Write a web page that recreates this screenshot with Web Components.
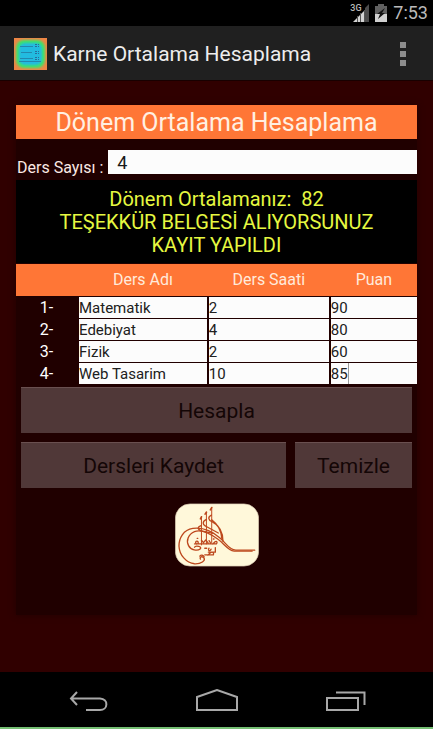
<!DOCTYPE html>
<html lang="tr">
<head>
<meta charset="utf-8">
<meta name="viewport" content="width=device-width, initial-scale=1">
<title>Karne Ortalama Hesaplama</title>
<style>
  html, body { margin: 0; min-height: 100%; background: #000; }
  body { font-family: Roboto, "Liberation Sans", sans-serif; color: #fbe9e4; }
</style>
</head>
<body>
<grade-app></grade-app>

<script>
const define = (name, html, setup) => {
  const template = document.createElement('template');
  template.innerHTML = '<style>*{box-sizing:border-box}button,input{font-family:inherit;margin:0;border:0;border-radius:0;outline:0}</style>' + html;
  customElements.define(name, class extends HTMLElement {
    constructor() {
      super();
      this.attachShadow({ mode: 'open' }).append(template.content.cloneNode(true));
    }
    connectedCallback() { if (setup) setup(this.shadowRoot, this); }
  });
};

define('status-bar', `
  <style>
    :host { display: flex; align-items: center; justify-content: flex-end; height: 26px; padding-right: 5px; background: #000; color: #bababa; }
    svg { display: block; }
    .signal { margin-right: 6px; position: relative; display: flex; }
    .net { font-size: 9px; line-height: 8px; font-weight: 500; position: absolute; left: 0; top: 0; }
    .battery { margin-right: 6px; }
    time { font-size: 18px; line-height: 26px; }
  </style>
  <span class="signal"><span class="net">3G</span>
    <svg width="19" height="18" viewBox="0 0 19 18" aria-label="Sinyal"><path fill="#d4d4d4" d="M3 18 14 7V18Z"/><path fill="#4c4c4c" d="M15 4 19 0V18H15Z"/><path stroke="#555" d="M7.500 12V18M10.500 9V18M14.500 6V18"/></svg>
  </span>
  <svg class="battery" width="12" height="18" viewBox="0 0 12 18" aria-label="Pil"><path fill="#606060" d="M3 0H9V2H12V18H0V2H3Z"/><path fill="#d0d0d0" d="M0 10H12V18H0Z"/><path fill="#111" d="M10 4 2 10H5L3 15 10 9H7Z"/></svg>
  <time>7:53</time>`);

define('app-bar', `
  <style>
    :host { display: flex; align-items: center; height: 54px; padding: 2px 20px 0 14px; background: #202020; color: #ededed; }
    h1 { flex: 1; margin: 0 0 0 6px; font-size: 21px; line-height: 28px; font-weight: 400; white-space: nowrap; }
    button { display: flex; justify-content: center; width: 20px; padding: 4px 0; background: none; }
    svg { display: block; }
  </style>
  <svg width="33" height="32" viewBox="0 0 33 32" aria-hidden="true">
    <defs>
      <filter id="soft" x="-20%" y="-20%" width="140%" height="140%"><feGaussianBlur stdDeviation="1.200"/></filter>
      <clipPath id="c"><path d="M0 0H33V32H0Z"/></clipPath>
    </defs>
    <path fill="#ee8645" d="M0 0H33V32H0Z"/>
    <g clip-path="url(#c)">
      <rect x="2" y="2" width="29" height="28" rx="8" fill="#3ee46a" filter="url(#soft)"/>
      <rect x="5" y="5" width="23" height="22" rx="6" fill="#21bbe0" filter="url(#soft)"/>
    </g>
    <path d="M6 8.500H19M7 14.500H18M6 20.500H19M5 23.500H27" stroke="#2387ad"/>
    <path d="M21 6.500H25M21 8.500H25M21 13.500H25M21 15.500H25M21 19.500H25M21 21.500H25" stroke="#286b9b" stroke-dasharray="2 1"/>
  </svg>
  <h1><slot></slot></h1>
  <button type="button" aria-label="Diğer seçenekler"><svg width="6" height="24" viewBox="0 0 6 24"><path fill="#8d8d8d" d="M0 0H6V6H0ZM0 9H6V15H0ZM0 18H6V24H0Z"/></svg></button>`);

define('panel-title', `
  <style>
    :host { display: block; background: #ff7636; color: #fff0e2; }
    h2 { margin: 0; padding-top: 2px; font-size: 25px; line-height: 32px; font-weight: 400; text-align: center; }
  </style>
  <h2><slot></slot></h2>`);

define('course-count', `
  <style>
    :host { display: flex; align-items: flex-end; gap: 5px; padding: 11px 0 6px 1px; }
    label { font-size: 16px; line-height: 12px; white-space: nowrap; }
    input { flex: 1; min-width: 0; height: 24px; padding: 0 9px; background: #fcfcfc; color: #181818; font-size: 18px; }
  </style>
  <label for="count">Ders Sayısı :</label><input id="count" inputmode="numeric" value="4">`);

define('result-box', `
  <style>
    :host { display: block; padding: 8px 0 6px; border-bottom: 1px solid #200000; background: #000; color: #e6f840; font-size: 20px; line-height: 23px; text-align: center; }
    ::slotted(p) { margin: 0; white-space: pre-wrap; }
  </style>
  <slot></slot>`);

define('course-table', `
  <style>
    :host { display: block; }
    table, thead, tbody { display: block; }
    tr { display: grid; grid-template-columns: 61px 129fr 121fr 87fr; column-gap: 2px; }
    tr.head { background: #ff7636; column-gap: 2px; }
    th { padding: 0; font-weight: 400; font-size: 16px; line-height: 32px; text-align: center; color: #ffeadb; }
    tbody { padding-top: 1px; }
    tbody tr { height: 21px; margin-bottom: 1px; }
    tbody tr:last-child { margin-bottom: 0; }
    tbody th { line-height: 21px; color: #fff; }
    td { position: relative; padding: 0; min-width: 0; }
    input { display: block; width: 100%; height: 21px; padding: 0; background: #fcfcfc; color: #202020; font-size: 15px; }
    .caret { position: absolute; left: 17px; top: 0; width: 1px; height: 21px; background: #999; }
  </style>
  <table>
    <thead><tr class="head"><th aria-label="Sıra"></th><th scope="col">Ders Adı</th><th scope="col">Ders Saati</th><th scope="col">Puan</th></tr></thead>
    <tbody></tbody>
  </table>`, root => {
  const courses = [['Matematik', 2, 90], ['Edebiyat', 4, 80], ['Fizik', 2, 60], ['Web Tasarim', 10, 85]];
  const columns = ['Ders Adı', 'Ders Saati', 'Puan'];
  root.querySelector('tbody').innerHTML = courses.map((course, i) =>
    `<tr><th scope="row">${i + 1}-</th>${course.map((value, j) =>
      `<td><input aria-label="${columns[j]} ${i + 1}" value="${value}">${i === 3 && j === 2 ? '<span class="caret"></span>' : ''}</td>`).join('')}</tr>`).join('');
});

define('action-button', `
  <style>
    :host { display: block; min-width: 0; }
    button { display: block; width: 100%; height: 46px; padding: 1px 0 0; border-top: 1px solid #6a5050; background: #503838; color: #140606; font-size: 21px; line-height: 24px; }
  </style>
  <button type="button"><slot></slot></button>`);

define('tughra-logo', `
  <style>
    :host { display: block; }
    svg { display: block; margin: 0 auto; }
  </style>
  <svg width="84" height="64" viewBox="29 27 254 190" role="img" aria-label="Tuğra">
    <rect x="30" y="28" width="252" height="188" rx="44" fill="#fff8da" stroke="#d6c5ae" stroke-width="2"/>
    <g fill="none" stroke="#bd481d" stroke-width="4" stroke-linecap="round" stroke-linejoin="round">
      <path d="M270 168H213C192 167 183 146 165 131C142 111 112 98 83 102C54 106 41 132 41 155C42 182 63 207 88 209C109 210 121 199 117 192C111 184 102 189 106 195"/>
      <path d="M262 171H208C188 168 177 147 158 134C131 115 105 105 88 112C69 120 62 139 70 154C77 168 97 171 105 164C113 157 91 152 88 159"/>
      <path d="M109 67V152M124 53V149M140 39V145" stroke-width="3"/>
      <path d="M109 67 106 73M124 53 120 59M140 39 136 46" stroke-width="5"/>
      <path d="M108 94C95 98 97 107 112 110L145 117M124 75C110 82 112 91 125 97L160 116M139 62C127 68 130 77 141 82C161 92 174 112 174 141M140 76C156 88 169 105 171 134"/>
      <path d="M88 149H154C158 145 156 140 151 142L143 149M94 149C88 143 94 137 99 143L99 149M109 138 115 145 122 137 129 146M132 139 137 147M96 132H98M145 134H147"/>
      <path d="M119 182H145C148 176 142 171 136 176L128 183M151 160V174H130M119 162H125M132 162C127 169 135 173 138 165M104 186C108 181 115 183 117 188"/>
    </g>
  </svg>`);

define('nav-bar', `
  <style>
    :host { display: flex; justify-content: center; height: 57px; border-bottom: 2px solid #75bf73; background: #000; color: #a8a8a8; }
    button { width: 129px; padding: 2px 0 0; background: none; color: inherit; }
    svg { display: block; margin: 0 auto; fill: none; stroke: currentColor; stroke-width: 2; }
  </style>
  <button type="button" aria-label="Geri"><svg width="40" height="24" viewBox="0 0 40 24"><path d="M9 3 3 9.500 9 16M3 9.500H32C41 10 40 21 32 21H18"/></svg></button>
  <button type="button" aria-label="Ana ekran"><svg width="42" height="24" viewBox="0 0 42 24"><path d="M1 21V8L21 1 41 8V21Z"/></svg></button>
  <button type="button" aria-label="Son uygulamalar"><svg width="40" height="24" viewBox="0 0 40 24"><path d="M1 9H32V21H1ZM10 3.500H38.500V16"/></svg></button>`);

define('grade-app', `
  <style>
    :host { display: flex; flex-direction: column; min-height: 100vh; }
    main { flex: 1; display: flex; padding: 24px 16px 57px; background: #300000; border-top: 1px solid #180000; }
    section { flex: 1; min-width: 0; background: #200000; box-shadow: 0 0 6px #200000; }
    .actions { display: grid; grid-template-columns: 265fr 117fr; gap: 9px; padding: 3px 5px 15px; }
    .wide { grid-column: 1 / -1; }
  </style>
  <status-bar></status-bar>
  <app-bar>Karne Ortalama Hesaplama</app-bar>
  <main>
    <section>
      <panel-title>Dönem Ortalama Hesaplama</panel-title>
      <course-count></course-count>
      <result-box><p>Dönem Ortalamanız:  82</p><p>TEŞEKKÜR BELGESİ ALIYORSUNUZ</p><p>KAYIT YAPILDI</p></result-box>
      <course-table></course-table>
      <div class="actions">
        <action-button class="wide">Hesapla</action-button>
        <action-button>Dersleri Kaydet</action-button>
        <action-button>Temizle</action-button>
      </div>
      <tughra-logo></tughra-logo>
    </section>
  </main>
  <nav-bar></nav-bar>`);
</script>
</body>
</html>
